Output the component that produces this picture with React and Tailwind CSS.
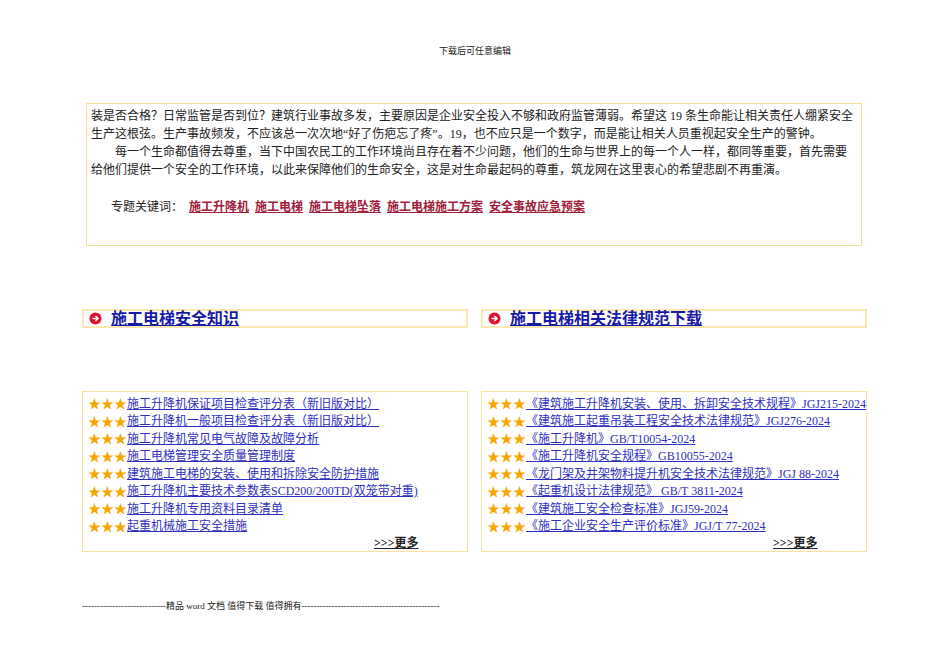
import React from "react";

const cjk = { fontFamily: '"Liberation Serif", "Noto Sans CJK SC", serif' };

const left = [
  "施工升降机保证项目检查评分表（新旧版对比）",
  "施工升降机一般项目检查评分表（新旧版对比）",
  "施工升降机常见电气故障及故障分析",
  "施工电梯管理安全质量管理制度",
  "建筑施工电梯的安装、使用和拆除安全防护措施",
  "施工升降机主要技术参数表SCD200/200TD(双笼带对重)",
  "施工升降机专用资料目录清单",
  "起重机械施工安全措施",
];
const right = [
  "《建筑施工升降机安装、使用、拆卸安全技术规程》JGJ215-2024",
  "《建筑施工起重吊装工程安全技术法律规范》JGJ276-2024",
  "《施工升降机》GB/T10054-2024",
  "《施工升降机安全规程》GB10055-2024",
  "《龙门架及井架物料提升机安全技术法律规范》JGJ 88-2024",
  "《起重机设计法律规范》 GB/T 3811-2024",
  "《建筑施工安全检查标准》JGJ59-2024 ",
  "《施工企业安全生产评价标准》JGJ/T 77-2024",
];

const Bullet = () => (
  <svg width="13" height="13" viewBox="0 0 13 13" className="shrink-0">
    <circle cx="6.5" cy="6.5" r="6" fill="#e0102c" />
    <path d="M3.5 6.5h5M6.5 4l2.5 2.5L6.5 9" stroke="#fff" strokeWidth="1.6" fill="none" />
  </svg>
);

const Section = ({ title, items, pad }) => (
  <div className="w-[386px] flex flex-col">
    <div className="h-[19px] border-2 border-[#fbe7b0] flex items-center pl-[5px] gap-[9px]">
      <Bullet />
      <span className="text-[16px] font-bold text-[#1a1aa8] underline leading-none">{pad}{title}</span>
    </div>
    <div className="mt-[63px] h-[161px] border border-[#fbe0a0] px-[5px] pt-[3px]">
      {items.map((t) => (
        <div key={t} className="flex items-center h-[17.5px] text-[12px] leading-none whitespace-nowrap">
          <span className="text-[#f7a600] text-[13px]">★★★</span>
          <span className="text-[#3030c0] underline">{t}</span>
        </div>
      ))}
      <div className="text-[12px] font-bold underline text-[#222] pl-[286px] leading-none mt-[2px]">&gt;&gt;&gt;更多</div>
    </div>
  </div>
);

export default function App() {
  return (
    <div className="w-[950px] h-[672px] bg-white relative text-[#222]" style={cjk}>
      <div className="pt-[47px] text-center text-[9px] leading-none">下载后可任意编辑</div>
      <div className="ml-[86px] mt-[47px] w-[776px] h-[143px] border border-[#f1df9a] px-[4px] pt-[3px] text-[12px] leading-[18px]">
        <p>装是否合格？日常监管是否到位？建筑行业事故多发，主要原因是企业安全投入不够和政府监管薄弱。希望这 19 条生命能让相关责任人绷紧安全生产这根弦。生产事故频发，不应该总一次次地“好了伤疤忘了疼”。19，也不应只是一个数字，而是能让相关人员重视起安全生产的警钟。</p>
        <p className="indent-[24px]">每一个生命都值得去尊重，当下中国农民工的工作环境尚且存在着不少问题，他们的生命与世界上的每一个人一样，都同等重要，首先需要给他们提供一个安全的工作环境，以此来保障他们的生命安全，这是对生命最起码的尊重，筑龙网在这里衷心的希望悲剧不再重演。</p>
        <div className="mt-[19px] pl-[20px] flex gap-[6px]">
          <span>专题关键词：</span>
          {["施工升降机", "施工电梯", "施工电梯坠落", "施工电梯施工方案", "安全事故应急预案"].map((k) => (
            <span key={k} className="text-[#a0203a] font-bold underline">{k}</span>
          ))}
        </div>
      </div>
      <div className="ml-[82px] mt-[63px] flex gap-[13px]">
        <Section title="施工电梯安全知识" items={left} pad="" />
        <Section title="施工电梯相关法律规范下载" items={right} pad=" " />
      </div>
      <div className="ml-[82px] mt-[50px] text-[9px] leading-none whitespace-nowrap">
        ----------------------------精品 word 文档 值得下载 值得拥有----------------------------------------------
      </div>
    </div>
  );
}
